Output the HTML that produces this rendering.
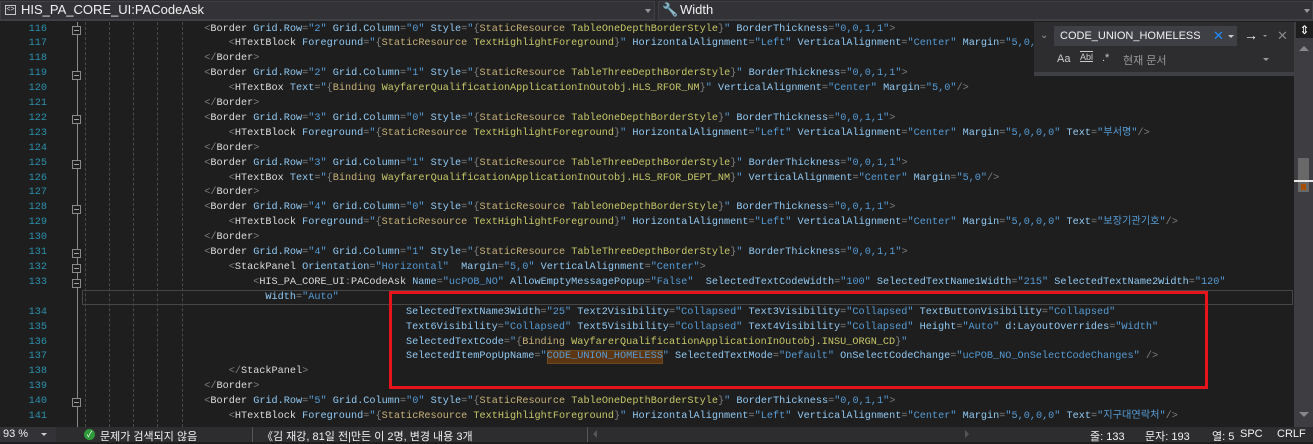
<!DOCTYPE html>
<html><head><meta charset="utf-8"><style>
*{margin:0;padding:0;box-sizing:border-box}
body{width:1313px;height:442px;overflow:hidden;background:#1e1e1e;position:relative;font-family:"Liberation Sans","Noto Sans CJK KR",sans-serif}
.abs{position:absolute}
pre{position:absolute;font-family:"Liberation Mono","Noto Sans CJK KR",monospace;font-size:10.2px;line-height:14.9px;white-space:pre;color:#d4d4d4}
g{color:#808080}n{color:#dcdcdc}t{color:#92caf4}v{color:#569cd6}k{color:#c8b27a}y{color:#c8c86a}
.nums{left:0;width:47px;text-align:right;color:#2b91af}
.dash{position:absolute;top:22px;height:405px;border-left:1px dashed #4a4a4a}
.fold{position:absolute;left:72px;width:9px;height:9px;border:1px solid #8a8a8a;background:#1e1e1e}
.fold:after{content:"";position:absolute;left:1px;top:3px;width:5px;height:1px;background:#a0a0a0}
.sb{color:#f1f1f1;font-size:11px;position:absolute;top:428px;white-space:nowrap}
</style></head><body>
<div class="abs" style="left:0;top:0;width:1313px;height:21px;background:#2d2d30;border-bottom:1px solid #3f3f46"></div>
<div class="abs" style="left:0;top:1px;width:655px;height:19px;background:#333337;border:1px solid #3f3f46"></div>
<div class="abs" style="left:5px;top:5px;width:11px;height:10px;border:1px solid #c8c8c8;font-size:7px;color:#ddd;line-height:8px;text-align:center">&lt;&gt;</div>
<div class="abs" style="left:21px;top:2px;color:#f1f1f1;font-size:13px">HIS_PA_CORE_UI:PACodeAsk</div>
<div class="abs" style="left:645px;top:9px;border:3px solid transparent;border-top:4px solid #999"></div>
<div class="abs" style="left:658px;top:1px;width:655px;height:19px;background:#333337;border:1px solid #3f3f46"></div>
<div class="abs" style="left:662px;top:2px;color:#ddd;font-size:13px">🔧</div>
<div class="abs" style="left:680px;top:2px;color:#f1f1f1;font-size:13px">Width</div>
<div class="abs" style="left:1304px;top:9px;border:3px solid transparent;border-top:4px solid #999"></div>

<div class="dash" style="left:85px"></div><div class="dash" style="left:109px"></div><div class="dash" style="left:133px"></div><div class="dash" style="left:157px"></div><div class="dash" style="left:182px"></div>
<div class="abs" style="left:77px;top:22px;width:1px;height:405px;background:#8a8a8a"></div>
<div class="fold" style="top:26px"></div><div class="fold" style="top:71px"></div><div class="fold" style="top:115px"></div><div class="fold" style="top:160px"></div><div class="fold" style="top:205px"></div><div class="fold" style="top:249px"></div><div class="fold" style="top:264px"></div><div class="fold" style="top:279px"></div><div class="fold" style="top:398px"></div>

<div class="abs" style="left:82px;top:290px;width:1211px;height:15px;border:1px solid #464646"></div>
<div class="abs" style="left:547px;top:350px;width:116px;height:14px;background:#5c3612;border:1px solid #6e4a20"></div>

<pre class="nums" style="top:22.5px">116
117
118
119
120
121
122
123
124
125
126
127
128
129
130
131
132
133

134
135
136
137
138
139
140
141</pre>
<pre style="left:82px;top:22.5px">                    <g>&lt;</g><n>Border</n> <t>Grid.Row</t><g>=</g><v>"2"</v> <t>Grid.Column</t><g>=</g><v>"0"</v> <t>Style</t><g>=</g><v>"</v><g>{</g><k>StaticResource</k> <y>TableOneDepthBorderStyle</y><g>}</g><v>"</v> <t>BorderThickness</t><g>=</g><v>"0,0,1,1"</v><g>&gt;</g>
                        <g>&lt;</g><n>HTextBlock</n> <t>Foreground</t><g>=</g><v>"</v><g>{</g><k>StaticResource</k> <y>TextHighlightForeground</y><g>}</g><v>"</v> <t>HorizontalAlignment</t><g>=</g><v>"Left"</v> <t>VerticalAlignment</t><g>=</g><v>"Center"</v> <t>Margin</t><g>=</g><v>"5,0,0,0"</v> <t>Text</t><g>=</g><v>"보장기관"</v><g>/&gt;</g>
                    <g>&lt;/</g><n>Border</n><g>&gt;</g>
                    <g>&lt;</g><n>Border</n> <t>Grid.Row</t><g>=</g><v>"2"</v> <t>Grid.Column</t><g>=</g><v>"1"</v> <t>Style</t><g>=</g><v>"</v><g>{</g><k>StaticResource</k> <y>TableThreeDepthBorderStyle</y><g>}</g><v>"</v> <t>BorderThickness</t><g>=</g><v>"0,0,1,1"</v><g>&gt;</g>
                        <g>&lt;</g><n>HTextBox</n> <t>Text</t><g>=</g><v>"</v><g>{</g><k>Binding</k> <y>WayfarerQualificationApplicationInOutobj.HLS_RFOR_NM</y><g>}</g><v>"</v> <t>VerticalAlignment</t><g>=</g><v>"Center"</v> <t>Margin</t><g>=</g><v>"5,0"</v><g>/&gt;</g>
                    <g>&lt;/</g><n>Border</n><g>&gt;</g>
                    <g>&lt;</g><n>Border</n> <t>Grid.Row</t><g>=</g><v>"3"</v> <t>Grid.Column</t><g>=</g><v>"0"</v> <t>Style</t><g>=</g><v>"</v><g>{</g><k>StaticResource</k> <y>TableOneDepthBorderStyle</y><g>}</g><v>"</v> <t>BorderThickness</t><g>=</g><v>"0,0,1,1"</v><g>&gt;</g>
                        <g>&lt;</g><n>HTextBlock</n> <t>Foreground</t><g>=</g><v>"</v><g>{</g><k>StaticResource</k> <y>TextHighlightForeground</y><g>}</g><v>"</v> <t>HorizontalAlignment</t><g>=</g><v>"Left"</v> <t>VerticalAlignment</t><g>=</g><v>"Center"</v> <t>Margin</t><g>=</g><v>"5,0,0,0"</v> <t>Text</t><g>=</g><v>"부서명"</v><g>/&gt;</g>
                    <g>&lt;/</g><n>Border</n><g>&gt;</g>
                    <g>&lt;</g><n>Border</n> <t>Grid.Row</t><g>=</g><v>"3"</v> <t>Grid.Column</t><g>=</g><v>"1"</v> <t>Style</t><g>=</g><v>"</v><g>{</g><k>StaticResource</k> <y>TableThreeDepthBorderStyle</y><g>}</g><v>"</v> <t>BorderThickness</t><g>=</g><v>"0,0,1,1"</v><g>&gt;</g>
                        <g>&lt;</g><n>HTextBox</n> <t>Text</t><g>=</g><v>"</v><g>{</g><k>Binding</k> <y>WayfarerQualificationApplicationInOutobj.HLS_RFOR_DEPT_NM</y><g>}</g><v>"</v> <t>VerticalAlignment</t><g>=</g><v>"Center"</v> <t>Margin</t><g>=</g><v>"5,0"</v><g>/&gt;</g>
                    <g>&lt;/</g><n>Border</n><g>&gt;</g>
                    <g>&lt;</g><n>Border</n> <t>Grid.Row</t><g>=</g><v>"4"</v> <t>Grid.Column</t><g>=</g><v>"0"</v> <t>Style</t><g>=</g><v>"</v><g>{</g><k>StaticResource</k> <y>TableOneDepthBorderStyle</y><g>}</g><v>"</v> <t>BorderThickness</t><g>=</g><v>"0,0,1,1"</v><g>&gt;</g>
                        <g>&lt;</g><n>HTextBlock</n> <t>Foreground</t><g>=</g><v>"</v><g>{</g><k>StaticResource</k> <y>TextHighlightForeground</y><g>}</g><v>"</v> <t>HorizontalAlignment</t><g>=</g><v>"Left"</v> <t>VerticalAlignment</t><g>=</g><v>"Center"</v> <t>Margin</t><g>=</g><v>"5,0,0,0"</v> <t>Text</t><g>=</g><v>"보장기관기호"</v><g>/&gt;</g>
                    <g>&lt;/</g><n>Border</n><g>&gt;</g>
                    <g>&lt;</g><n>Border</n> <t>Grid.Row</t><g>=</g><v>"4"</v> <t>Grid.Column</t><g>=</g><v>"1"</v> <t>Style</t><g>=</g><v>"</v><g>{</g><k>StaticResource</k> <y>TableThreeDepthBorderStyle</y><g>}</g><v>"</v> <t>BorderThickness</t><g>=</g><v>"0,0,1,1"</v><g>&gt;</g>
                        <g>&lt;</g><n>StackPanel</n> <t>Orientation</t><g>=</g><v>"Horizontal"</v>  <t>Margin</t><g>=</g><v>"5,0"</v> <t>VerticalAlignment</t><g>=</g><v>"Center"</v><g>&gt;</g>
                            <g>&lt;</g><n>HIS_PA_CORE_UI</n><g>:</g><n>PACodeAsk</n> <t>Name</t><g>=</g><v>"ucPOB_NO"</v> <t>AllowEmptyMessagePopup</t><g>=</g><v>"False"</v>  <t>SelectedTextCodeWidth</t><g>=</g><v>"100"</v> <t>SelectedTextName1Width</t><g>=</g><v>"215"</v> <t>SelectedTextName2Width</t><g>=</g><v>"120"</v>
                              <t>Width</t><g>=</g><v>"Auto"</v>
                                                     <t>SelectedTextName3Width</t><g>=</g><v>"25"</v> <t>Text2Visibility</t><g>=</g><v>"Collapsed"</v> <t>Text3Visibility</t><g>=</g><v>"Collapsed"</v> <t>TextButtonVisibility</t><g>=</g><v>"Collapsed"</v>
                                                     <t>Text6Visibility</t><g>=</g><v>"Collapsed"</v> <t>Text5Visibility</t><g>=</g><v>"Collapsed"</v> <t>Text4Visibility</t><g>=</g><v>"Collapsed"</v> <t>Height</t><g>=</g><v>"Auto"</v> <t>d:LayoutOverrides</t><g>=</g><v>"Width"</v>
                                                     <t>SelectedTextCode</t><g>=</g><v>"</v><g>{</g><k>Binding</k> <y>WayfarerQualificationApplicationInOutobj.INSU_ORGN_CD</y><g>}</g><v>"</v>
                                                     <t>SelectedItemPopUpName</t><g>=</g><v>"CODE_UNION_HOMELESS"</v> <t>SelectedTextMode</t><g>=</g><v>"Default"</v> <t>OnSelectCodeChange</t><g>=</g><v>"ucPOB_NO_OnSelectCodeChanges"</v> <g>/&gt;</g>
                        <g>&lt;/</g><n>StackPanel</n><g>&gt;</g>
                    <g>&lt;/</g><n>Border</n><g>&gt;</g>
                    <g>&lt;</g><n>Border</n> <t>Grid.Row</t><g>=</g><v>"5"</v> <t>Grid.Column</t><g>=</g><v>"0"</v> <t>Style</t><g>=</g><v>"</v><g>{</g><k>StaticResource</k> <y>TableOneDepthBorderStyle</y><g>}</g><v>"</v> <t>BorderThickness</t><g>=</g><v>"0,0,1,1"</v><g>&gt;</g>
                        <g>&lt;</g><n>HTextBlock</n> <t>Foreground</t><g>=</g><v>"</v><g>{</g><k>StaticResource</k> <y>TextHighlightForeground</y><g>}</g><v>"</v> <t>HorizontalAlignment</t><g>=</g><v>"Left"</v> <t>VerticalAlignment</t><g>=</g><v>"Center"</v> <t>Margin</t><g>=</g><v>"5,0,0,0"</v> <t>Text</t><g>=</g><v>"지구대연락처"</v><g>/&gt;</g></pre>

<div class="abs" style="left:389px;top:291px;width:819px;height:98px;border:3px solid #e8141c"></div>

<div class="abs" style="left:1034px;top:22px;width:260px;height:54px;background:#2d2d30;border-bottom:4px solid #3f3f46"></div>
<div class="abs" style="left:1040px;top:30px;color:#999;font-size:10px">⌄</div>
<div class="abs" style="left:1054px;top:26px;width:183px;height:20px;background:#3f3f46"></div>
<div class="abs" style="left:1060px;top:30px;color:#f1f1f1;font-size:11px">CODE_UNION_HOMELESS</div>
<div class="abs" style="left:1213px;top:28px;color:#1e90ff;font-size:13px">✕</div>
<div class="abs" style="left:1228px;top:35px;border:3px solid transparent;border-top:3px solid #ccc"></div>
<div class="abs" style="left:1244px;top:27px;color:#f1f1f1;font-size:14px;font-weight:bold">→</div>
<div class="abs" style="left:1263px;top:35px;border:2px solid transparent;border-top:2px solid #999"></div>
<div class="abs" style="left:1277px;top:28px;color:#888;font-size:13px">✕</div>
<div class="abs" style="left:1057px;top:53px;color:#ccc;font-size:11px">Aa</div>
<div class="abs" style="left:1080px;top:52px;color:#ccc;font-size:9px;text-decoration:underline overline">Abl</div>
<div class="abs" style="left:1102px;top:52px;color:#ccc;font-size:11px">.*</div>
<div class="abs" style="left:1123px;top:52px;color:#999;font-size:11px">현재 문서</div>
<div class="abs" style="left:1263px;top:58px;border:3px solid transparent;border-top:3px solid #999"></div>

<div class="abs" style="left:1294px;top:22px;width:19px;height:405px;background:#3e3e42"></div>
<div class="abs" style="left:1296px;top:22px;width:17px;height:16px;background:#1e1e1e;color:#fff;font-size:12px;text-align:center;line-height:16px">⇕</div>
<div class="abs" style="left:1299px;top:46px;border:5px solid transparent;border-bottom:5px solid #888;border-top:0"></div>
<div class="abs" style="left:1298px;top:158px;width:11px;height:34px;background:#686868"></div>
<div class="abs" style="left:1294px;top:180px;width:19px;height:2px;background:#e8e8e8"></div>
<div class="abs" style="left:1301px;top:184px;width:5px;height:6px;background:#a84e00"></div>
<div class="abs" style="left:1299px;top:412px;border:5px solid transparent;border-top:5px solid #888;border-bottom:0"></div>

<div class="abs" style="left:0;top:427px;width:1313px;height:15px;background:#2d2d30"></div>
<div class="abs" style="left:0;top:427px;width:56px;height:15px;background:#333337"></div>
<div class="sb" style="left:3px">93 %</div>
<div class="abs" style="left:41px;top:433px;border:3px solid transparent;border-top:3px solid #ccc"></div>
<div class="abs" style="left:84px;top:429px;width:11px;height:11px;border-radius:50%;background:#2e9a3a;color:#fff;font-size:8px;line-height:11px;text-align:center">✓</div>
<div class="sb" style="left:100px">문제가 검색되지 않음</div>
<div class="abs" style="left:252px;top:427px;width:1px;height:15px;background:#555"></div>
<div class="sb" style="left:262px">《김 재강, 81일 전|만든 이 2명, 변경 내용 3개</div>
<div class="abs" style="left:587px;top:427px;width:1px;height:15px;background:#555"></div>
<div class="abs" style="left:593px;top:430px;border:4px solid transparent;border-right:4px solid #555;border-left:0"></div>
<div class="abs" style="left:965px;top:430px;border:4px solid transparent;border-left:4px solid #555;border-right:0"></div>
<div class="sb" style="left:1090px">줄: 133</div>
<div class="sb" style="left:1145px">문자: 193</div>
<div class="sb" style="left:1212px">열: 5</div>
<div class="sb" style="left:1240px">SPC</div>
<div class="sb" style="left:1277px">CRLF</div>
</body></html>
